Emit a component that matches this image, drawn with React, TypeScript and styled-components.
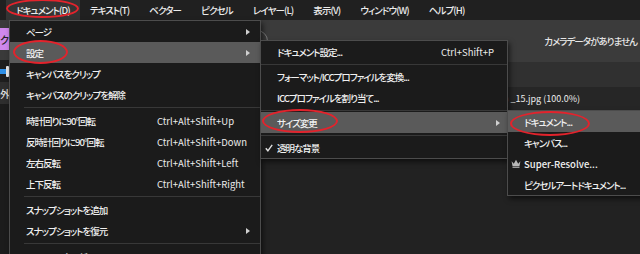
import React from "react";
import styled, { createGlobalStyle } from "styled-components";

const GlobalStyle = createGlobalStyle`
  html, body {
    margin: 0;
    padding: 0;
    background: #222;
  }
  body {
    font-family: "Noto Sans CJK JP", "Noto Sans", sans-serif;
    font-feature-settings: "palt";
  }
`;

const Screen = styled.div`
  position: relative;
  width: 640px;
  height: 254px;
  overflow: hidden;
  background: #222;
  color: #f0f0f0;
  font-size: 9.5px;
  font-weight: 500;
`;

const MenuBar = styled.div`
  display: flex;
  height: 20px;
  padding-left: 6px;
  background: #202020;
`;

const MenuBarItem = styled.div<{ $active?: boolean }>`
  display: flex;
  align-items: center;
  padding: 0 10px;
  white-space: nowrap;
  letter-spacing: -0.9px;
  color: #ececec;
  background: ${(p) => (p.$active ? "#343434" : "transparent")};
`;

const Workspace = styled.div`
  display: flex;
  height: 234px;
`;

const SideStrip = styled.div`
  width: 9px;
  display: flex;
  flex-direction: column;
  background: #1c1c1c;
  overflow: hidden;
`;

const SideBlock = styled.div<{ $h: number; $bg: string }>`
  height: ${(p) => p.$h}px;
  background: ${(p) => p.$bg};
  display: flex;
  align-items: center;
  justify-content: flex-end;
  font-size: 10px;
  color: #222;
  overflow: hidden;
`;

const SideGlyph = styled.span`
  color: #ddd;
  margin-right: -1px;
`;

const Slider = styled.div`
  display: flex;
  align-items: center;
  width: 9px;
`;

const SliderBar = styled.div`
  width: 6px;
  height: 5px;
  background: #2f8fe6;
`;

const SliderKnob = styled.div`
  width: 3px;
  height: 11px;
  border-radius: 1px;
  background: #e8e8e8;
`;

const Main = styled.div`
  flex: 1;
  display: flex;
  flex-direction: column;
`;

const ContextBar = styled.div`
  height: 42px;
  display: flex;
  align-items: center;
  background: #3b3b3b;
  padding-right: 3px;
`;

const Dial = styled.div`
  width: 20px;
  height: 20px;
  margin-left: 237px;
  border-radius: 50%;
  border: 1px solid #7a7a7a;
`;

const CameraNote = styled.span`
  margin-left: auto;
  color: #e6e6e6;
  white-space: nowrap;
  letter-spacing: -1px;
`;

const InfoBar = styled.div`
  height: 25px;
  background: #303030;
`;

const TabBar = styled.div`
  height: 23px;
  display: flex;
  align-items: center;
  justify-content: flex-end;
  padding-right: 60px;
  background: #262626;
`;

const Tab = styled.span`
  color: #ececec;
  font-size: 9px;
  font-weight: 400;
  white-space: nowrap;
`;

const Canvas = styled.div`
  flex: 1;
  background: #222;
`;

const Menu = styled.div<{ $left: number; $top: number; $width: number }>`
  position: absolute;
  left: ${(p) => p.$left}px;
  top: ${(p) => p.$top}px;
  width: ${(p) => p.$width}px;
  background: #1b1b1b;
  border: 1px solid #4c4c4c;
  box-shadow: 2px 3px 5px rgba(0, 0, 0, 0.55);
`;

const Row = styled.div<{ $hi?: boolean; $cols: string }>`
  display: grid;
  grid-template-columns: ${(p) => p.$cols};
  align-items: center;
  height: 21px;
  white-space: nowrap;
  background: ${(p) => (p.$hi ? "#5a5a5a" : "transparent")};
`;

const Lead = styled.span`
  display: flex;
  align-items: center;
  justify-content: center;
  color: #cfcfcf;
`;

const Label = styled.span<{ $latin?: boolean }>`
  overflow: hidden;
  letter-spacing: ${(p) => (p.$latin ? "0" : "-1px")};
`;

const Shortcut = styled.span<{ $right?: boolean }>`
  justify-self: ${(p) => (p.$right ? "end" : "start")};
  color: #ececec;
  font-weight: 400;
`;

const ArrowCell = styled.span`
  display: flex;
  align-items: center;
`;

const Arrow = styled.span`
  display: block;
  width: 0;
  height: 0;
  margin-left: 2px;
  border-left: 4px solid #d0d0d0;
  border-top: 3px solid transparent;
  border-bottom: 3px solid transparent;
`;

const Sep = styled.div<{ $inset: number; $h: number }>`
  height: ${(p) => p.$h}px;
  display: flex;
  align-items: center;
  padding-left: ${(p) => p.$inset}px;

  &::after {
    content: "";
    flex: 1;
    height: 1px;
    background: #383838;
  }
`;

const Mark = styled.div<{ $left: number; $top: number; $w: number; $h: number }>`
  position: absolute;
  left: ${(p) => p.$left}px;
  top: ${(p) => p.$top}px;
  width: ${(p) => p.$w}px;
  height: ${(p) => p.$h}px;
  border: 2px solid #e3232c;
  border-radius: 50%;
  box-sizing: border-box;
`;

type Item =
  | { sep: true }
  | { label: string; shortcut?: string; sub?: boolean; hi?: boolean; latin?: boolean; lead?: "check" | "crown" };

const MAIN_COLS = "16px 131px 1fr 16px";
const SUB_COLS = "16px 1fr auto 13px";

const mainItems: Item[] = [
  { label: "ページ", sub: true },
  { label: "設定", sub: true, hi: true },
  { label: "キャンバスをクリップ" },
  { label: "キャンバスのクリップを解除" },
  { sep: true },
  { label: "時計回りに90°回転", shortcut: "Ctrl+Alt+Shift+Up" },
  { label: "反時計回りに90°回転", shortcut: "Ctrl+Alt+Shift+Down" },
  { label: "左右反転", shortcut: "Ctrl+Alt+Shift+Left" },
  { label: "上下反転", shortcut: "Ctrl+Alt+Shift+Right" },
  { sep: true },
  { label: "スナップショットを追加" },
  { label: "スナップショットを復元", sub: true },
  { sep: true },
  { label: "リソースマネージャー..." },
];

const settingsItems: Item[] = [
  { label: "ドキュメント設定...", shortcut: "Ctrl+Shift+P" },
  { sep: true },
  { label: "フォーマット/ICCプロファイルを変換..." },
  { label: "ICCプロファイルを割り当て..." },
  { sep: true },
  { label: "サイズ変更", sub: true, hi: true },
  { sep: true },
  { label: "透明な背景", lead: "check" },
];

const resizeItems: Item[] = [
  { label: "ドキュメント...", hi: true },
  { label: "キャンバス..." },
  { label: "Super-Resolve...", lead: "crown", latin: true },
  { label: "ピクセルアートドキュメント..." },
];

const CheckIcon = () => (
  <svg width="8" height="8" viewBox="0 0 8 8">
    <polyline points="0.8,4.2 2.9,6.8 7.2,0.8" fill="none" stroke="#e0e0e0" strokeWidth="1.4" />
  </svg>
);

const CrownIcon = () => (
  <svg width="10" height="9" viewBox="0 0 10 9">
    <path d="M0.6 2.2 L2.8 4.8 L5 0.8 L7.2 4.8 L9.4 2.2 L8.5 7 L1.5 7 Z" fill="#b8b8b8" />
    <rect x="1.5" y="7.6" width="7" height="1.2" fill="#b8b8b8" />
  </svg>
);

const MenuList = ({
  items,
  cols,
  inset,
  sepH,
  right,
}: {
  items: Item[];
  cols: string;
  inset: number;
  sepH: number;
  right?: boolean;
}) => (
  <>
    {items.map((it, i) =>
      "sep" in it ? (
        <Sep key={i} $inset={inset} $h={sepH} />
      ) : (
        <Row key={i} $hi={it.hi} $cols={cols}>
          <Lead>{it.lead === "check" ? <CheckIcon /> : it.lead === "crown" ? <CrownIcon /> : null}</Lead>
          <Label $latin={it.latin}>{it.label}</Label>
          <Shortcut $right={right}>{it.shortcut ?? ""}</Shortcut>
          <ArrowCell>{it.sub && <Arrow />}</ArrowCell>
        </Row>
      )
    )}
  </>
);

const menuBar = ["ドキュメント(D)", "テキスト(T)", "ベクター", "ピクセル", "レイヤー(L)", "表示(V)", "ウィンドウ(W)", "ヘルプ(H)"];

export default function App() {
  return (
    <>
      <GlobalStyle />
      <Screen>
        <MenuBar>
          {menuBar.map((m, i) => (
            <MenuBarItem key={m} $active={i === 0}>
              {m}
            </MenuBarItem>
          ))}
        </MenuBar>
        <Workspace>
          <SideStrip>
            <SideBlock $h={8} $bg="#3a3a3a" />
            <SideBlock $h={22} $bg="#cf88ec">ク</SideBlock>
            <SideBlock $h={10} $bg="#3a3a3a" />
            <SideBlock $h={22} $bg="#1e1e1e">
              <Slider>
                <SliderBar />
                <SliderKnob />
              </Slider>
            </SideBlock>
            <SideBlock $h={22} $bg="#2e2e2e">
              <SideGlyph>外</SideGlyph>
            </SideBlock>
            <SideBlock $h={150} $bg="#1c1c1c" />
          </SideStrip>
          <Main>
            <ContextBar>
              <Dial />
              <CameraNote>カメラデータがありません</CameraNote>
            </ContextBar>
            <InfoBar />
            <TabBar>
              <Tab>写真 (1) _15.jpg (100.0%)</Tab>
            </TabBar>
            <Canvas />
          </Main>
        </Workspace>

        <Menu $left={9} $top={20} $width={250}>
          <MenuList items={mainItems} cols={MAIN_COLS} inset={14} sepH={5} />
        </Menu>
        <Menu $left={260} $top={40} $width={246}>
          <MenuList items={settingsItems} cols={SUB_COLS} inset={0} sepH={4} right />
        </Menu>
        <Menu $left={507} $top={110} $width={150}>
          <MenuList items={resizeItems} cols={SUB_COLS} inset={0} sepH={4} />
        </Menu>

        <Mark $left={6} $top={-1} $w={73} $h={19} />
        <Mark $left={13} $top={40} $w={55} $h={24} />
        <Mark $left={262} $top={109} $w={76} $h={24} />
        <Mark $left={510} $top={111} $w={80} $h={25} />
      </Screen>
    </>
  );
}
